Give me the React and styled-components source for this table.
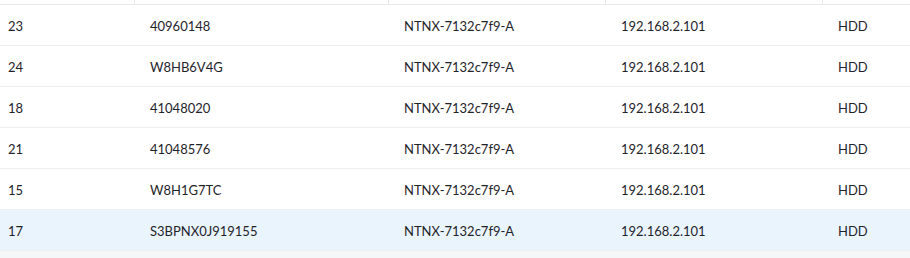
import React from "react";
import styled, { createGlobalStyle } from "styled-components";

const Global = createGlobalStyle`
  html, body { margin: 0; padding: 0; }
  body { background: #f5f6f7; font-family: Lato, "Open Sans", sans-serif; }
`;

const cols = "135px 254px 217px 217px 1fr";

const Table = styled.div`
  width: 910px;
  background: #ffffff;
`;

const HeaderStub = styled.div`
  display: grid;
  grid-template-columns: ${cols};
  height: 4px;
  border-bottom: 1px solid #e6e8ea;
`;

const StubCell = styled.div`
  border-right: ${(p) => (p.$last ? "none" : "1px solid #e6e8ea")};
`;

const Row = styled.div`
  display: grid;
  grid-template-columns: ${cols};
  height: 40px;
  align-items: center;
  border-bottom: 1px solid #eceef0;
  background: ${(p) => (p.$selected ? "#eaf4fd" : "#ffffff")};
`;

const Cell = styled.div`
  padding-left: ${(p) => (p.$first ? "8px" : "15px")};
  padding-top: 2px;
  font-size: 13px;
  color: #1f242b;
  white-space: nowrap;
`;

const rows = [
  ["23", "40960148"],
  ["24", "W8HB6V4G"],
  ["18", "41048020"],
  ["21", "41048576"],
  ["15", "W8H1G7TC"],
  ["17", "S3BPNX0J919155"],
];

export default function App() {
  return (
    <>
      <Global />
      <Table>
        <HeaderStub>
          <StubCell />
          <StubCell />
          <StubCell />
          <StubCell />
          <StubCell $last />
        </HeaderStub>
        {rows.map(([id, serial], i) => (
          <Row key={id} $selected={i === rows.length - 1}>
            <Cell $first>{id}</Cell>
            <Cell>{serial}</Cell>
            <Cell>NTNX-7132c7f9-A</Cell>
            <Cell>192.168.2.101</Cell>
            <Cell>HDD</Cell>
          </Row>
        ))}
      </Table>
    </>
  );
}
